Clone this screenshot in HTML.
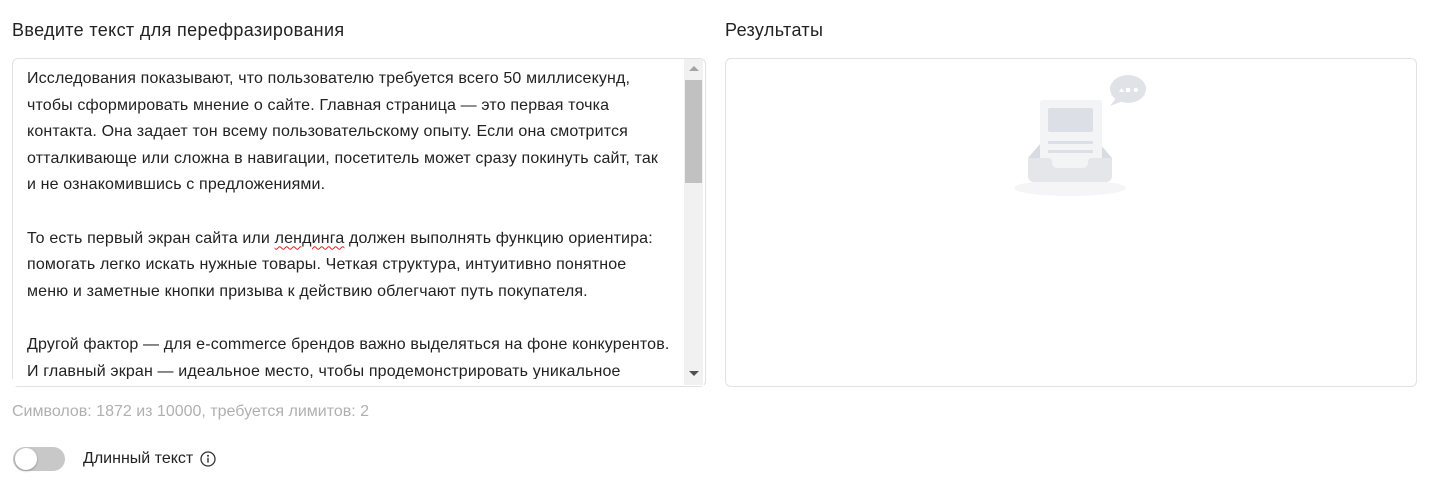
<!DOCTYPE html>
<html><head><meta charset="utf-8"><style>
body{margin:0;width:1434px;height:485px;background:#fff;font-family:"Liberation Sans",Arial,sans-serif;color:#1f1f1f;position:relative;overflow:hidden}
.h{position:absolute;top:20px;font-size:18px;letter-spacing:0.35px;color:#222}
.box{position:absolute;top:58px;height:327px;border:1px solid #e2e2e2;border-radius:6px;background:#fff}
.txt{position:absolute;left:27px;top:66px;width:643px;font-size:16px;letter-spacing:0.15px;line-height:26.6px;color:#222}
.txt p{margin:0 0 26.6px 0}
.sb{position:absolute;left:684px;top:59px;width:19px;height:326px;background:#f1f1f1}
.thumb{position:absolute;left:685px;top:80px;width:17px;height:103px;background:#c1c1c1}
.u{text-decoration:underline wavy #e02020;text-decoration-thickness:1px;text-underline-offset:3px}
</style></head><body>
<div class="h" style="left:12px">Введите текст для перефразирования</div>
<div class="h" style="left:725px">Результаты</div>
<div class="box" style="left:12px;width:692px"></div>
<div class="box" style="left:725px;width:690px"></div>
<div class="txt">
<p>Исследования показывают, что пользователю требуется всего 50 миллисекунд, чтобы сформировать мнение о сайте. Главная страница — это первая точка контакта. Она задает тон всему пользовательскому опыту. Если она смотрится отталкивающе или сложна в навигации, посетитель может сразу покинуть сайт, так и не ознакомившись с предложениями.</p>
<p>То есть первый экран сайта или <span class="u">лендинга</span> должен выполнять функцию ориентира: помогать легко искать нужные товары. Четкая структура, интуитивно понятное меню и заметные кнопки призыва к действию облегчают путь покупателя.</p>
<p>Другой фактор — для e-commerce брендов важно выделяться на фоне конкурентов. И главный экран — идеальное место, чтобы продемонстрировать уникальное</p>
</div>
<div style="position:absolute;left:12px;top:379px;width:692px;height:7px;background:#fff"></div>
<div class="sb"></div>
<div class="thumb"></div>
<div style="position:absolute;left:689px;top:66px;width:0;height:0;border-left:5px solid transparent;border-right:5px solid transparent;border-bottom:5px solid #a3a3a3"></div>
<div style="position:absolute;left:689px;top:371px;width:0;height:0;border-left:5px solid transparent;border-right:5px solid transparent;border-top:5px solid #505050"></div>
<svg style="position:absolute;left:1010px;top:70px" width="140" height="130" viewBox="0 0 140 130">
<ellipse cx="60" cy="118" rx="56" ry="8" fill="#f5f5f7"/>
<path d="M18 105 V88 L30 74 H90 L102 88 V105 Q102 112 95 112 H25 Q18 112 18 105Z" fill="#d8dbe1"/>
<rect x="30" y="30" width="62" height="70" rx="3" fill="#f3f4f6"/>
<rect x="38" y="38" width="45" height="24" rx="2" fill="#dcdfe5"/>
<rect x="38" y="71" width="45" height="3" fill="#dcdfe5"/>
<rect x="38" y="80" width="45" height="3" fill="#dcdfe5"/>
<path d="M18 88 H38 Q42 88 42 92 Q42 98 48 98 H72 Q78 98 78 92 Q78 88 82 88 H102 V105 Q102 112 95 112 H25 Q18 112 18 105Z" fill="#e4e6ea"/>
<ellipse cx="118" cy="19" rx="18" ry="14" fill="#dfe2e7"/>
<path d="M106 28 L100 36 L113 31Z" fill="#dfe2e7"/>
<path d="M109 22 l2.5 -4 l2.5 4z" fill="#fff"/><rect x="116" y="18" width="4" height="4" fill="#fff"/><circle cx="126" cy="20" r="2.2" fill="#fff"/>
</svg>
<div style="position:absolute;left:12px;top:403px;font-size:16px;color:#b0b0b0">Символов: 1872 из 10000, требуется лимитов: 2</div>
<div style="position:absolute;left:13px;top:447px;width:52px;height:24px;border-radius:12px;background:#c8c8c8"></div>
<div style="position:absolute;left:15px;top:448px;width:22px;height:22px;border-radius:50%;background:#fff;box-shadow:0 1px 2px rgba(0,0,0,.3)"></div>
<div style="position:absolute;left:83px;top:450px;font-size:16px;color:#222">Длинный текст</div>
<svg style="position:absolute;left:200px;top:451px" width="16" height="16" viewBox="0 0 16 16"><circle cx="8" cy="8" r="7" fill="none" stroke="#333" stroke-width="1.3"/><circle cx="8" cy="4.8" r="1" fill="#333"/><rect x="7.3" y="6.7" width="1.4" height="5" fill="#333"/></svg>
</body></html>
